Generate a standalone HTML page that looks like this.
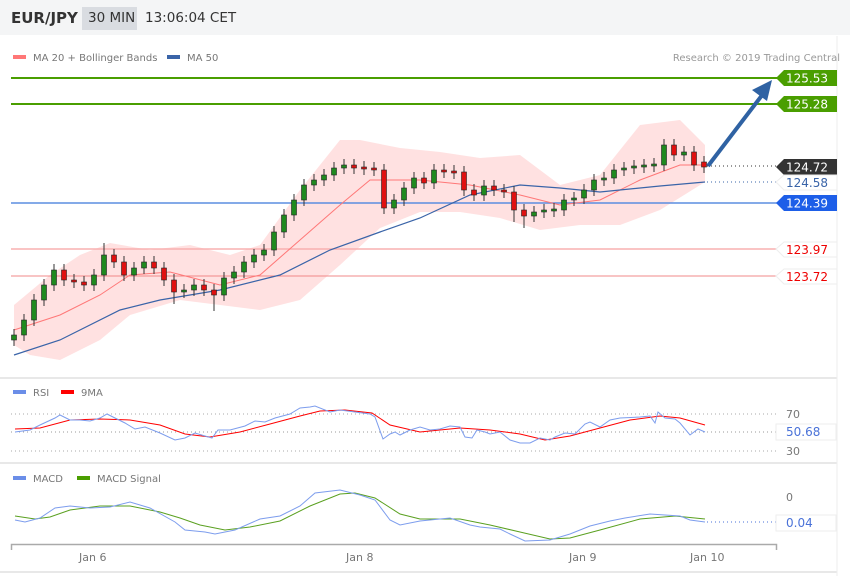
<!DOCTYPE html>
<html><head><meta charset="utf-8"><style>
body{margin:0;width:850px;height:576px;overflow:hidden;background:#fff;font-family:"Liberation Sans","DejaVu Sans",sans-serif}
.hdr{position:absolute;left:0;top:0;width:850px;height:35px;background:#f4f5f6}
.t{position:absolute;white-space:nowrap}
</style></head><body>
<div class="hdr"></div>
<div class="t" style="left:11px;top:9px;font-size:15px;font-weight:bold;color:#333;font-family:'DejaVu Sans',sans-serif">EUR/JPY</div>
<div style="position:absolute;left:82px;top:7px;width:55px;height:23px;background:#d9dce1"></div>
<div class="t" style="left:88px;top:10px;font-size:13.5px;color:#333;font-family:'DejaVu Sans',sans-serif">30 MIN</div>
<div class="t" style="left:145px;top:10px;font-size:13.5px;color:#333;font-family:'DejaVu Sans',sans-serif">13:06:04 CET</div>
<svg width="850" height="576" style="position:absolute;left:0;top:0" font-family="DejaVu Sans, sans-serif">
<rect x="13" y="55" width="13" height="4" fill="#f77"/>
<text x="33" y="61" font-size="10" fill="#777">MA 20 + Bollinger Bands</text>
<rect x="167" y="55" width="13" height="4" fill="#3a64a8"/>
<text x="187" y="61" font-size="10" fill="#777">MA 50</text>
<text x="840" y="61" font-size="10" fill="#999" text-anchor="end">Research © 2019 Trading Central</text>
<line x1="0" y1="378" x2="837" y2="378" stroke="#e8e8e8" stroke-width="2"/>
<line x1="0" y1="463" x2="837" y2="463" stroke="#e8e8e8" stroke-width="2"/>
<line x1="0" y1="572" x2="837" y2="572" stroke="#e8e8e8" stroke-width="2"/>
<line x1="837" y1="36" x2="837" y2="576" stroke="#eee"/>
<polygon fill="#ffdcdc" opacity="0.85" points="14,305 50,275 80,255 110,243 150,250 190,245 230,255 260,245 300,190 340,140 360,140 400,148 440,152 480,158 520,155 560,185 600,175 640,125 680,120 705,145 705,182 660,210 620,225 580,225 540,230 500,218 460,212 420,212 380,228 340,265 300,300 260,310 220,305 180,300 130,315 100,340 60,360 30,355 14,345"/>
<line x1="11" y1="78" x2="778" y2="78" stroke="#4a9e00" stroke-width="2"/>
<line x1="11" y1="104" x2="778" y2="104" stroke="#4a9e00" stroke-width="2"/>
<line x1="11" y1="203" x2="778" y2="203" stroke="#5b8de0" stroke-width="1.5"/>
<line x1="11" y1="249" x2="778" y2="249" stroke="#f9b0b0" stroke-width="1.5"/>
<line x1="11" y1="276" x2="778" y2="276" stroke="#f08888" stroke-width="1"/>
<line x1="707" y1="166" x2="778" y2="166" stroke="#333" stroke-dasharray="1,3"/>
<line x1="707" y1="182" x2="778" y2="182" stroke="#3a64a8" stroke-dasharray="1,3"/>
<polyline fill="none" stroke="#f77" stroke-width="1" points="14,330 60,315 100,295 130,275 170,272 220,285 260,275 300,240 340,205 370,180 420,180 470,185 520,195 560,205 600,200 640,180 680,165 705,165"/>
<polyline fill="none" stroke="#3a64a8" stroke-width="1.2" points="14,355 60,340 120,310 160,300 220,290 280,275 330,250 380,232 420,218 470,195 520,185 560,188 600,192 660,186 705,182"/>
<g stroke="#333" stroke-width="1">
<path d="M14 329V346M24 314V341M34 294V326M44 279V306M54 264V291M64 264V286M74 274V288M84 276V291M94 269V291M104 243V281M114 249V268M124 256V281M134 262V281M144 256V274M154 256V274M164 262V286M174 274V304M184 284V298M194 279V296M204 279V296M214 284V311M224 272V301M234 266V284M244 256V278M254 249V268M264 244V261M274 226V256M284 209V238M294 194V221M304 179V206M314 174V191M324 169V186M334 162V181M344 159V174M354 159V174M364 161V175M374 162V176M384 164V214M394 194V214M404 182V206M414 172V194M424 172V189M434 164V189M444 164V178M454 165V179M464 166V196M474 184V201M484 180V201M494 180V196M504 184V198M514 186V222M524 204V228M534 206V222M544 204V218M554 203V217M564 194V216M574 192V206M584 184V204M594 174V196M604 172V186M614 164V184M624 162V176M634 160V174M644 159V173M654 158V172M664 139V171M674 139V161M684 146V161M694 146V171M704 156V173"/>
</g>
<g stroke="#222" stroke-width="0.6">
<g fill="#1f8a1f">
<rect x="11.5" y="335" width="5" height="5"/><rect x="21.5" y="320" width="5" height="15"/><rect x="31.5" y="300" width="5" height="20"/><rect x="41.5" y="285" width="5" height="15"/><rect x="51.5" y="270" width="5" height="15"/>
<rect x="91.5" y="275" width="5" height="10"/><rect x="101.5" y="255" width="5" height="20"/><rect x="131.5" y="268" width="5" height="7"/><rect x="141.5" y="262" width="5" height="6"/>
<rect x="181.5" y="290" width="5" height="2"/><rect x="191.5" y="285" width="5" height="5"/><rect x="221.5" y="278" width="5" height="17"/><rect x="231.5" y="272" width="5" height="6"/><rect x="241.5" y="262" width="5" height="10"/><rect x="251.5" y="255" width="5" height="7"/><rect x="261.5" y="250" width="5" height="5"/><rect x="271.5" y="232" width="5" height="18"/><rect x="281.5" y="215" width="5" height="17"/><rect x="291.5" y="200" width="5" height="15"/><rect x="301.5" y="185" width="5" height="15"/><rect x="311.5" y="180" width="5" height="5"/><rect x="321.5" y="175" width="5" height="5"/><rect x="331.5" y="168" width="5" height="7"/><rect x="341.5" y="165" width="5" height="3"/>
<rect x="391.5" y="200" width="5" height="8"/><rect x="401.5" y="188" width="5" height="12"/><rect x="411.5" y="178" width="5" height="10"/><rect x="431.5" y="170" width="5" height="13"/><rect x="481.5" y="186" width="5" height="9"/>
<rect x="531.5" y="212" width="5" height="4"/><rect x="541.5" y="210" width="5" height="2"/><rect x="551.5" y="209" width="5" height="2"/><rect x="561.5" y="200" width="5" height="10"/><rect x="571.5" y="198" width="5" height="2"/><rect x="581.5" y="190" width="5" height="8"/><rect x="591.5" y="180" width="5" height="10"/><rect x="601.5" y="178" width="5" height="2"/><rect x="611.5" y="170" width="5" height="8"/><rect x="621.5" y="168" width="5" height="2"/><rect x="631.5" y="166" width="5" height="2"/><rect x="641.5" y="165" width="5" height="2"/><rect x="651.5" y="164" width="5" height="2"/><rect x="661.5" y="145" width="5" height="20"/><rect x="681.5" y="152" width="5" height="3"/>
</g>
<g fill="#e01010">
<rect x="61.5" y="270" width="5" height="10"/><rect x="71.5" y="280" width="5" height="2"/><rect x="81.5" y="282" width="5" height="3"/><rect x="111.5" y="255" width="5" height="7"/><rect x="121.5" y="262" width="5" height="13"/><rect x="151.5" y="262" width="5" height="6"/><rect x="161.5" y="268" width="5" height="12"/><rect x="171.5" y="280" width="5" height="12"/><rect x="201.5" y="285" width="5" height="5"/><rect x="211.5" y="290" width="5" height="5"/>
<rect x="351.5" y="165" width="5" height="3"/><rect x="361.5" y="167" width="5" height="2"/><rect x="371.5" y="168" width="5" height="2"/><rect x="381.5" y="170" width="5" height="38"/><rect x="421.5" y="178" width="5" height="5"/><rect x="441.5" y="170" width="5" height="2"/><rect x="451.5" y="171" width="5" height="2"/><rect x="461.5" y="172" width="5" height="18"/><rect x="471.5" y="190" width="5" height="5"/><rect x="491.5" y="186" width="5" height="4"/><rect x="501.5" y="190" width="5" height="2"/><rect x="511.5" y="192" width="5" height="18"/><rect x="521.5" y="210" width="5" height="6"/>
<rect x="671.5" y="145" width="5" height="10"/><rect x="691.5" y="152" width="5" height="13"/><rect x="701.5" y="162" width="5" height="5"/>
</g></g>
<line x1="708" y1="166" x2="766" y2="90" stroke="#2f62a3" stroke-width="4"/>
<polygon points="772,80 752,90 767,101" fill="#2f62a3"/>
<g font-size="12">
<polygon points="776,78 784,70 837,70 837,86 784,86" fill="#4a9e00"/><text x="786" y="82.5" fill="#fff">125.53</text>
<polygon points="776,104 784,96 837,96 837,112 784,112" fill="#4a9e00"/><text x="786" y="108.5" fill="#fff">125.28</text>
<polygon points="776,167 784,159 837,159 837,175 784,175" fill="#333"/><text x="786" y="171.5" fill="#fff">124.72</text>
<polygon points="776,182 784,175 837,175 837,190 784,190" fill="#fff" stroke="#eee"/><text x="786" y="187" fill="#3a64a8">124.58</text>
<polygon points="776,203 784,195 837,195 837,211 784,211" fill="#1d5ee8"/><text x="786" y="207.5" fill="#fff">124.39</text>
<polygon points="776,249 784,242 837,242 837,257 784,257" fill="#fff" stroke="#eee"/><text x="786" y="254" fill="#e00">123.97</text>
<polygon points="776,276 784,269 837,269 837,284 784,284" fill="#fff" stroke="#eee"/><text x="786" y="281" fill="#e00">123.72</text>
</g>
<rect x="13" y="390" width="13" height="4" fill="#6b8ee8"/><text x="33" y="396" font-size="10" fill="#777">RSI</text>
<rect x="61" y="390" width="13" height="4" fill="#f00"/><text x="81" y="396" font-size="10" fill="#777">9MA</text>
<g stroke="#aaa" stroke-dasharray="1,3"><line x1="11" y1="414" x2="776" y2="414"/><line x1="11" y1="451" x2="776" y2="451"/></g>
<line x1="11" y1="432" x2="778" y2="432" stroke="#999" stroke-dasharray="1,3"/>
<polyline fill="none" stroke="#f00" stroke-width="1" points="15,429 40,428 70,420 100,419 130,420 160,425 185,434 210,437 240,432 270,424 300,416 320,411 345,410 372,413 390,425 420,432 460,428 490,430 520,434 545,440 570,436 600,428 630,420 660,416 680,418 705,425"/>
<polyline fill="none" stroke="#7d9ded" stroke-width="1" points="15,432 30,430 40,425 55,418 60,415 70,420 80,420 90,421 100,418 107,414 115,418 125,423 135,429 145,427 160,433 175,440 185,438 195,433 205,436 212,438 218,430 230,430 245,426 255,421 265,422 275,418 290,414 300,408 310,407 315,406 330,412 340,410 355,412 370,414 375,417 383,439 390,434 395,432 400,435 410,430 420,427 430,430 440,429 450,426 460,427 465,437 472,438 477,430 485,432 490,434 500,432 510,440 520,443 530,443 540,438 550,440 555,437 565,433 575,434 585,424 590,422 600,427 610,420 620,418 640,417 650,416 655,423 658,412 665,418 675,419 680,423 690,435 698,429 705,432"/>
<text x="786" y="418" font-size="11" fill="#777">70</text>
<text x="786" y="455" font-size="11" fill="#777">30</text>
<rect x="776" y="424" width="60" height="16" fill="#fff" stroke="#eee"/><text x="786" y="436" font-size="12" fill="#4a72d8">50.68</text>
<rect x="13" y="476" width="13" height="4" fill="#6b8ee8"/><text x="33" y="482" font-size="10" fill="#777">MACD</text>
<rect x="77" y="476" width="13" height="4" fill="#4a9e00"/><text x="97" y="482" font-size="10" fill="#777">MACD Signal</text>
<polyline fill="none" stroke="#5aa020" stroke-width="1" points="15,516 35,519 50,517 70,510 100,506 130,506 160,512 180,518 200,525 225,530 250,527 280,521 310,506 340,494 355,493 375,498 400,514 420,519 460,519 490,525 520,532 550,539 570,538 600,530 640,519 675,516 705,519"/>
<polyline fill="none" stroke="#7d9ded" stroke-width="1" points="15,520 25,522 40,518 55,508 70,506 90,508 110,507 130,502 150,508 175,522 185,530 205,532 215,534 235,530 260,519 280,516 300,506 315,493 340,490 360,495 375,500 390,520 400,525 420,521 450,518 470,525 480,527 500,529 510,534 525,541 550,540 570,534 590,526 610,521 625,518 650,514 680,516 690,520 705,522"/>
<line x1="707" y1="522" x2="778" y2="522" stroke="#4a72d8" stroke-dasharray="1,3"/>
<text x="786" y="501" font-size="11" fill="#777">0</text>
<rect x="776" y="515" width="60" height="16" fill="#fff" stroke="#eee"/><text x="786" y="527" font-size="12" fill="#4a72d8">0.04</text>
<path d="M11.5 550V544.5H776.5V550" fill="none" stroke="#aaa" stroke-width="1.5"/>
<g font-size="11" fill="#777"><text x="79" y="561">Jan 6</text><text x="346" y="561">Jan 8</text><text x="569" y="561">Jan 9</text><text x="690" y="561">Jan 10</text></g>
</svg>
</body></html>
